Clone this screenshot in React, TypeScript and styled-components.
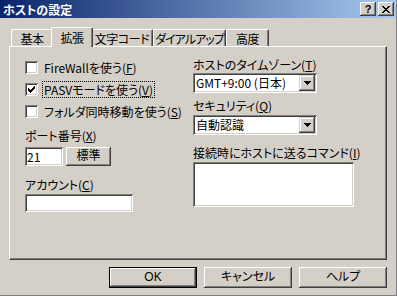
import * as React from "react";
import styled, { createGlobalStyle } from "styled-components";

const FACE = "#D4D0C8";
const SHADOW = "#808080";
const DARK = "#404040";

const GlobalStyle = createGlobalStyle`
  html, body {
    margin: 0;
    padding: 0;
    background: ${FACE};
  }
  body {
    font-family: "Noto Sans CJK JP", "Liberation Sans", sans-serif;
    font-size: 12px;
  }
`;

const Window = styled.div`
  width: 397px;
  height: 296px;
  box-sizing: border-box;
  display: flex;
  flex-direction: column;
  background: ${FACE};
  border-right: 1px solid ${SHADOW};
  border-bottom: 1px solid ${SHADOW};
  color: #000;
  font-family: "Noto Sans CJK JP", "Liberation Sans", sans-serif;
  font-size: 12px;
  line-height: 13px;
  font-feature-settings: "palt";
`;

const TitleBar = styled.div`
  height: 18px;
  flex: none;
  display: flex;
  align-items: center;
  padding: 0 2px 0 3px;
  background: linear-gradient(to right, #0a246a, #a6caf0);
  color: #fff;
  font-weight: bold;
`;

const Title = styled.span`
  flex: 1;
`;

const CaptionButtons = styled.div`
  display: flex;
  gap: 2px;
`;

const CaptionButton = styled.div`
  width: 16px;
  height: 14px;
  box-sizing: border-box;
  display: flex;
  align-items: center;
  justify-content: center;
  background: ${FACE};
  color: #000;
  font-family: "Liberation Sans", sans-serif;
  font-size: 11px;
  font-weight: bold;
  box-shadow: inset -1px -1px ${DARK}, inset 1px 1px #fff,
    inset -2px -2px ${SHADOW};
`;

const Body = styled.div`
  flex: 1;
  display: flex;
  flex-direction: column;
  padding: 9px 9px 7px 9px;
`;

const TabRow = styled.div`
  height: 19px;
  display: flex;
  align-items: flex-end;
  padding-left: 2px;
`;

const Tab = styled.div<{ $w: number; $active?: boolean; $tight?: boolean }>`
  width: ${(p) => p.$w}px;
  height: ${(p) => (p.$active ? 20 : 17)}px;
  box-sizing: border-box;
  margin: ${(p) => (p.$active ? "0 -2px -1px -2px" : "0")};
  padding: ${(p) => (p.$active ? "3px 2px 0" : "2px 0 0")};
  position: relative;
  z-index: ${(p) => (p.$active ? 2 : 1)};
  display: flex;
  justify-content: center;
  white-space: nowrap;
  letter-spacing: ${(p) => (p.$tight ? "-1px" : "-0.4px")};
  background: ${FACE};
  border-top: 1px solid #fff;
  border-left: 1px solid #fff;
  border-right: 1px solid ${DARK};
  border-radius: 2px 2px 0 0;
  box-shadow: inset -1px 0 ${SHADOW};
`;

const Panel = styled.div`
  height: 214px;
  box-sizing: border-box;
  border-top: 1px solid #fff;
  border-left: 1px solid #fff;
  border-right: 1px solid ${DARK};
  border-bottom: 1px solid ${DARK};
  box-shadow: inset -1px -1px ${SHADOW};
  padding: 9px 0 0 15px;
  display: grid;
  grid-template-columns: 168px 1fr;
  align-items: start;
`;

const Column = styled.div`
  display: flex;
  flex-direction: column;
  align-items: flex-start;
`;

const CheckRow = styled.div`
  height: 22px;
  display: flex;
  align-items: center;
  gap: 6px;
  white-space: nowrap;
`;

const CheckBox = styled.div`
  width: 13px;
  height: 13px;
  box-sizing: border-box;
  background: #fff;
  box-shadow: inset 1px 1px ${SHADOW}, inset -1px -1px #fff,
    inset 2px 2px ${DARK}, inset -2px -2px ${FACE};
  display: flex;
`;

const FocusLabel = styled.span`
  margin-left: -2px;
  padding: 1px 1px;
  border: 1px dotted #000;
`;

const U = styled.span`
  text-decoration: underline;
`;

const FieldLabel = styled.div<{ $top: number }>`
  margin-top: ${(p) => p.$top}px;
  height: 13px;
  white-space: nowrap;
`;

const Sunken = styled.div<{ $w: number; $h: number; $top: number }>`
  width: ${(p) => p.$w}px;
  height: ${(p) => p.$h}px;
  margin-top: ${(p) => p.$top}px;
  box-sizing: border-box;
  background: #fff;
  box-shadow: inset 1px 1px ${SHADOW}, inset -1px -1px #fff,
    inset 2px 2px ${DARK}, inset -2px -2px ${FACE};
  padding: 3px 2px 0 2px;
  display: flex;
  align-items: flex-start;
  white-space: nowrap;
`;

const PortRow = styled.div`
  display: flex;
  align-items: flex-start;
  gap: 3px;
  margin-top: 5px;
`;

const Button = styled.div<{ $w: number; $h: number; $default?: boolean }>`
  width: ${(p) => p.$w}px;
  height: ${(p) => p.$h}px;
  box-sizing: border-box;
  display: flex;
  align-items: center;
  justify-content: center;
  background: ${FACE};
  border: ${(p) => (p.$default ? "1px solid #000" : "none")};
  box-shadow: inset -1px -1px ${DARK}, inset 1px 1px #fff,
    inset -2px -2px ${SHADOW};
  font-family: "Liberation Sans", "Noto Sans CJK JP", sans-serif;
`;

const Combo = styled.div<{ $top: number }>`
  width: 124px;
  height: 20px;
  margin-top: ${(p) => p.$top}px;
  box-sizing: border-box;
  padding: 2px;
  display: flex;
  background: #fff;
  box-shadow: inset 1px 1px ${SHADOW}, inset -1px -1px #fff,
    inset 2px 2px ${DARK}, inset -2px -2px ${FACE};
`;

const ComboText = styled.div`
  flex: 1;
  padding: 1px 0 0 1px;
  white-space: nowrap;
  overflow: hidden;
`;

const DropButton = styled.div`
  width: 16px;
  height: 16px;
  box-sizing: border-box;
  display: flex;
  align-items: center;
  justify-content: center;
  background: ${FACE};
  box-shadow: inset -1px -1px ${DARK}, inset 1px 1px ${FACE},
    inset -2px -2px ${SHADOW}, inset 2px 2px #fff;
`;

const Footer = styled.div`
  display: flex;
  justify-content: flex-end;
  gap: 7px;
  margin-top: 7px;
`;

const CheckMark = () => (
  <svg width="13" height="13" viewBox="0 0 13 13" shapeRendering="crispEdges">
    <path
      d="M3 5h1v3h-1z M4 6h1v3h-1z M5 7h1v3h-1z M6 6h1v3h-1z M7 5h1v3h-1z M8 4h1v3h-1z M9 3h1v3h-1z"
      fill="#000"
    />
  </svg>
);

const Arrow = () => (
  <svg width="7" height="4" viewBox="0 0 7 4" shapeRendering="crispEdges">
    <path d="M0 0h7v1h-7z M1 1h5v1h-5z M2 2h3v1h-3z M3 3h1v1h-1z" fill="#000" />
  </svg>
);

const CloseGlyph = () => (
  <svg width="8" height="7" viewBox="0 0 8 7" shapeRendering="crispEdges">
    <path
      d="M0 0h2v1h-2z M6 0h2v1h-2z M1 1h2v1h-2z M5 1h2v1h-2z M2 2h4v1h-4z M3 3h2v1h-2z M2 4h4v1h-4z M1 5h2v1h-2z M5 5h2v1h-2z M0 6h2v1h-2z M6 6h2v1h-2z"
      fill="#000"
    />
  </svg>
);

const tabs = [
  { label: "基本", w: 42 },
  { label: "拡張", w: 42, active: true },
  { label: "文字コード", w: 62 },
  { label: "ダイアルアップ", w: 73, tight: true },
  { label: "高度", w: 43 },
];

export default function App() {
  return (
    <>
      <GlobalStyle />
      <Window>
        <TitleBar>
          <Title>ホストの設定</Title>
          <CaptionButtons>
            <CaptionButton>?</CaptionButton>
            <CaptionButton>
              <CloseGlyph />
            </CaptionButton>
          </CaptionButtons>
        </TitleBar>
        <Body>
          <TabRow>
            {tabs.map((t) => (
              <Tab key={t.label} $w={t.w} $active={t.active} $tight={t.tight}>
                {t.label}
              </Tab>
            ))}
          </TabRow>
          <Panel>
            <Column>
              <CheckRow>
                <CheckBox />
                <span>
                  FireWallを使う(<U>F</U>)
                </span>
              </CheckRow>
              <CheckRow>
                <CheckBox>
                  <CheckMark />
                </CheckBox>
                <FocusLabel>
                  PASVモードを使う(<U>V</U>)
                </FocusLabel>
              </CheckRow>
              <CheckRow>
                <CheckBox />
                <span>
                  フォルダ同時移動を使う(<U>S</U>)
                </span>
              </CheckRow>
              <FieldLabel $top={7}>
                ポート番号(<U>X</U>)
              </FieldLabel>
              <PortRow>
                <Sunken $w={38} $h={19} $top={0}>
                  21
                </Sunken>
                <Button $w={45} $h={19}>
                  標準
                </Button>
              </PortRow>
              <FieldLabel $top={12}>
                アカウント(<U>C</U>)
              </FieldLabel>
              <Sunken $w={108} $h={18} $top={3} />
            </Column>
            <Column>
              <FieldLabel $top={2}>
                ホストのタイムゾーン(<U>T</U>)
              </FieldLabel>
              <Combo $top={2}>
                <ComboText>GMT+9:00 (日本)</ComboText>
                <DropButton>
                  <Arrow />
                </DropButton>
              </Combo>
              <FieldLabel $top={6}>
                セキュリティ(<U>Q</U>)
              </FieldLabel>
              <Combo $top={3}>
                <ComboText>自動認識</ComboText>
                <DropButton>
                  <Arrow />
                </DropButton>
              </Combo>
              <FieldLabel $top={11}>
                接続時にホストに送るコマンド(<U>I</U>)
              </FieldLabel>
              <Sunken $w={161} $h={45} $top={3} />
            </Column>
          </Panel>
          <Footer>
            <Button $w={88} $h={21} $default>
              OK
            </Button>
            <Button $w={88} $h={21}>
              キャンセル
            </Button>
            <Button $w={88} $h={21}>
              ヘルプ
            </Button>
          </Footer>
        </Body>
      </Window>
    </>
  );
}
